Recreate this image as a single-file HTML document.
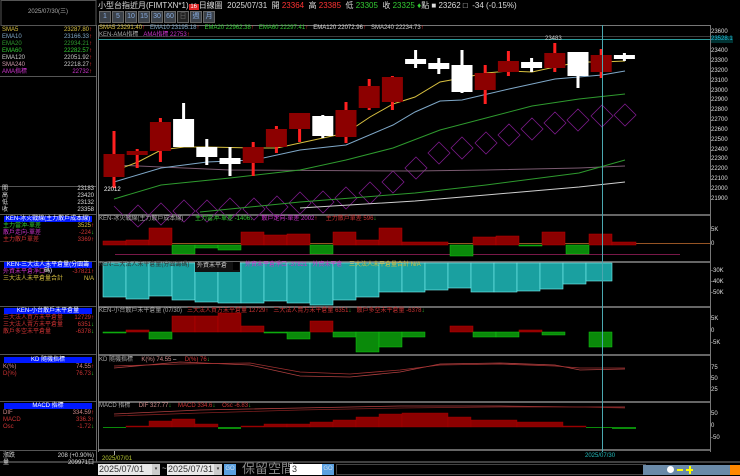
<!DOCTYPE html>
<html><head><meta charset="utf-8"><style>
*{margin:0;padding:0;box-sizing:border-box}
body{width:740px;height:475px;background:#000;overflow:hidden;position:relative;font-family:"Liberation Sans","Noto Sans CJK TC",sans-serif;color:#ddd}
.t{position:absolute;white-space:nowrap;font-size:6px;line-height:7px}
.r{text-align:right}
.hb{position:absolute;left:4px;width:88px;height:6px;background:#0018ff;color:#fff;font-size:6px;line-height:6px;text-align:center}
.btn{position:absolute;top:11px;width:12px;height:12px;background:#3a4048;border:1px solid #666;color:#8ad;font-size:7px;line-height:10px;text-align:center}
</style></head><body>
<svg width="740" height="475" style="position:absolute;left:0;top:0">
<rect x="1" y="0.5" width="95" height="25" fill="none" stroke="#555"/>
<line x1="96.5" y1="25" x2="96.5" y2="462" stroke="#666"/>
<line x1="98.5" y1="25" x2="98.5" y2="452" stroke="#777"/>
<line x1="710.5" y1="25" x2="710.5" y2="452" stroke="#777"/>
<line x1="98" y1="25.5" x2="710" y2="25.5" stroke="#777"/>
<g stroke="#888" stroke-width="1.5">
<line x1="98" y1="215" x2="710" y2="215"/><line x1="98" y1="262" x2="710" y2="262"/>
<line x1="98" y1="307" x2="710" y2="307"/><line x1="98" y1="355" x2="710" y2="355"/>
<line x1="98" y1="402" x2="710" y2="402"/><line x1="98" y1="450" x2="710" y2="450"/>
<line x1="0" y1="462" x2="740" y2="462" stroke="#555"/>
</g>
<g stroke="#555"><line x1="0" y1="76.5" x2="96" y2="76.5"/><line x1="0" y1="186.5" x2="96" y2="186.5"/><line x1="0" y1="214.5" x2="96" y2="214.5"/><line x1="0" y1="261.5" x2="96" y2="261.5"/><line x1="0" y1="306.5" x2="96" y2="306.5"/><line x1="0" y1="354.5" x2="96" y2="354.5"/><line x1="0" y1="401.5" x2="96" y2="401.5"/><line x1="0" y1="450.5" x2="96" y2="450.5"/></g>
<line x1="98" y1="39.5" x2="710" y2="39.5" stroke="#2a9a9a"/>
<line x1="98" y1="36.5" x2="710" y2="36.5" stroke="#777" stroke-width=".5"/>
<g fill="none" stroke="#7a1a88" stroke-width=".8">
<path d="M625 104l11 11-11 11-11-11z M602 105l11 11-11 11-11-11z M578 109l11 11-11 11-11-11z M555 112l11 11-11 11-11-11z M532 118l11 11-11 11-11-11z M509 124l11 11-11 11-11-11z M486 132l11 11-11 11-11-11z M462 137l11 11-11 11-11-11z M439 142l11 11-11 11-11-11z M416 157l11 11-11 11-11-11z M393 171l11 11-11 11-11-11z M370 182l11 11-11 11-11-11z M346 187l11 11-11 11-11-11z M323 191l11 11-11 11-11-11z M300 192l11 11-11 11-11-11z M277 196l11 11-11 11-11-11z M254 198l11 11-11 11-11-11z M230 198l11 11-11 11-11-11z M207 200l11 11-11 11-11-11z M184 200l11 11-11 11-11-11z M161 203l11 11-11 11-11-11z M138 205l11 11-11 11-11-11z M114 206l9 9"/>
</g>
<g fill="none" stroke-width="1">
<polyline stroke="#7a5a70" points="114,165 230,170 415,171 486,170 579,168 625,166"/>
<polyline stroke="#cfcfcf" points="300,208 415,201 486,195 579,187 625,182"/>
<polyline stroke="#2e9a2e" points="200,212 300,202 415,193 486,185 579,173 625,160"/>
<polyline stroke="#2e9a2e" points="114,199 161,185 230,178 300,170 346,160 393,148 440,130 486,118 532,106 579,99 625,94"/>
<polyline stroke="#7fa8c8" points="114,182 161,168 207,162 254,160 300,150 346,145 393,125 415,112 440,101 462,100 509,89 555,79 602,75 625,71"/>
<polyline stroke="#d8c040" points="114,171 138,162 161,150 184,147 207,147 254,148 277,148 300,143 323,138 346,133 370,117 393,104 415,97 440,82 462,78 486,73 509,71 532,72 555,67 579,62 602,62 625,61"/>
</g>
<g fill="#ff2020">
<rect x="112.5" y="131" width="3" height="57"/><rect x="135.7" y="149" width="3" height="19"/><rect x="158.9" y="118" width="3" height="44"/>
<rect x="251.7" y="142" width="3" height="34"/><rect x="274.9" y="126" width="3" height="27"/><rect x="298.1" y="113" width="3" height="29"/>
<rect x="344.5" y="102" width="3" height="41"/><rect x="367.7" y="79" width="3" height="31"/><rect x="390.9" y="76" width="3" height="34"/>
<rect x="483.7" y="65" width="3" height="39"/><rect x="506.9" y="51" width="3" height="25"/><rect x="553.3" y="43" width="3" height="29"/><rect x="599.7" y="49" width="3" height="29"/>
</g>
<g fill="#8c0000">
<rect x="103.5" y="154" width="21" height="23"/><rect x="126.7" y="151" width="21" height="4"/><rect x="149.9" y="122" width="21" height="29"/>
<rect x="242.7" y="147" width="21" height="16"/><rect x="265.9" y="129" width="21" height="18"/><rect x="289.1" y="113" width="21" height="16"/>
<rect x="335.5" y="110" width="21" height="27"/><rect x="358.7" y="86" width="21" height="22"/><rect x="381.9" y="77" width="21" height="25"/>
<rect x="474.7" y="73" width="21" height="17"/><rect x="497.9" y="61" width="21" height="11"/><rect x="544.3" y="53" width="21" height="15"/><rect x="590.7" y="55" width="21" height="17"/>
</g>
<g fill="#fff">
<rect x="182.1" y="103" width="3" height="44"/><rect x="173.1" y="119" width="21" height="28"/>
<rect x="205.3" y="139" width="3" height="26"/><rect x="196.3" y="147" width="21" height="10"/>
<rect x="228.5" y="147" width="3" height="29"/><rect x="219.5" y="158" width="21" height="6"/>
<rect x="321.3" y="115" width="3" height="23"/><rect x="312.3" y="116" width="21" height="20"/>
<rect x="414.1" y="50" width="3" height="18"/><rect x="405.1" y="59" width="21" height="5"/>
<rect x="437.3" y="58" width="3" height="16"/><rect x="428.3" y="63" width="21" height="6"/>
<rect x="460.5" y="50" width="3" height="43"/><rect x="451.5" y="65" width="21" height="27"/>
<rect x="530.1" y="58" width="3" height="14"/><rect x="521.1" y="62" width="21" height="6"/>
<rect x="576.5" y="52" width="3" height="36"/><rect x="567.5" y="52" width="21" height="24"/>
<rect x="622.9" y="53" width="3" height="8"/><rect x="613.9" y="55" width="21" height="4"/>
</g>
<line x1="110" y1="243.5" x2="710" y2="243.5" stroke="#c87030" stroke-width=".8"/>
<line x1="115" y1="254.5" x2="680" y2="254.5" stroke="#a02060" stroke-width=".8"/>
<g fill="#8c0000" stroke="#b00" stroke-width=".5">
<rect x="103" y="241" width="23" height="4"/><rect x="126" y="240" width="23" height="5"/><rect x="149" y="228" width="23" height="17"/>
<rect x="241" y="232" width="23" height="13"/><rect x="264" y="235" width="23" height="10"/><rect x="287" y="234" width="23" height="11"/>
<rect x="333" y="232" width="23" height="13"/><rect x="356" y="240" width="23" height="5"/><rect x="379" y="228" width="23" height="17"/>
<rect x="402" y="242" width="46" height="3"/><rect x="473" y="237" width="23" height="8"/><rect x="496" y="236" width="23" height="9"/>
<rect x="542" y="232" width="23" height="13"/><rect x="589" y="234" width="23" height="11"/><rect x="612" y="242" width="24" height="3"/>
</g>
<g fill="#0a8a0a" stroke="#1c1" stroke-width=".5">
<rect x="172" y="245" width="23" height="9"/><rect x="195" y="245" width="23" height="3"/><rect x="218" y="245" width="23" height="5"/>
<rect x="310" y="245" width="23" height="9"/><rect x="450" y="245" width="23" height="11"/><rect x="519" y="245" width="23" height="1"/><rect x="566" y="245" width="23" height="9"/>
</g>
<g fill="#1aa0a0" stroke="#7ee" stroke-width=".6">
<rect x="103" y="263" width="23" height="34"/><rect x="126" y="263" width="23" height="36"/><rect x="149" y="263" width="23" height="33"/>
<rect x="172" y="263" width="23" height="37"/><rect x="195" y="263" width="23" height="39"/><rect x="218" y="263" width="23" height="40"/>
<rect x="241" y="263" width="23" height="40"/><rect x="264" y="263" width="23" height="38"/><rect x="287" y="263" width="23" height="40"/>
<rect x="310" y="263" width="23" height="42"/><rect x="333" y="263" width="23" height="37"/><rect x="356" y="263" width="23" height="34"/>
<rect x="379" y="263" width="23" height="29"/><rect x="402" y="263" width="23" height="29"/><rect x="425" y="263" width="23" height="27"/>
<rect x="448" y="263" width="23" height="25"/><rect x="471" y="263" width="23" height="29"/><rect x="494" y="263" width="23" height="29"/>
<rect x="517" y="263" width="23" height="28"/><rect x="540" y="263" width="23" height="26"/><rect x="563" y="263" width="23" height="21"/><rect x="586" y="263" width="26" height="18"/>
</g>
<rect x="195" y="262" width="45" height="10" fill="#111"/>
<rect x="233" y="262" width="6" height="8" fill="#000"/>
<g fill="#8c0000" stroke="#b00" stroke-width=".5">
<rect x="126" y="330" width="23" height="2"/><rect x="172" y="316" width="23" height="16"/><rect x="195" y="316" width="23" height="16"/>
<rect x="218" y="313" width="23" height="19"/><rect x="241" y="326" width="23" height="6"/><rect x="310" y="321" width="23" height="11"/>
<rect x="450" y="326" width="23" height="6"/><rect x="519" y="330" width="23" height="2"/>
</g>
<g fill="#0a8a0a" stroke="#1c1" stroke-width=".5">
<rect x="103" y="332" width="23" height="1"/><rect x="149" y="332" width="23" height="7"/><rect x="264" y="332" width="23" height="1"/>
<rect x="287" y="332" width="23" height="7"/><rect x="333" y="332" width="23" height="5"/><rect x="356" y="332" width="23" height="20"/>
<rect x="379" y="332" width="23" height="15"/><rect x="402" y="332" width="23" height="5"/><rect x="473" y="332" width="23" height="5"/>
<rect x="496" y="332" width="23" height="5"/><rect x="542" y="332" width="23" height="3"/><rect x="589" y="332" width="23" height="15"/>
</g>
<polyline fill="none" stroke="#b04040" stroke-width=".8" points="114,368 180,362 250,365 300,376 350,377 400,372 440,364 500,363 555,365 580,370 625,369"/>
<polyline fill="none" stroke="#a03030" stroke-width=".8" points="114,366 180,364 250,363 300,372 350,374 400,370 440,365 500,364 555,366 580,368 625,368"/>
<polyline fill="none" stroke="#b04040" stroke-width=".8" points="114,414 200,410 300,408 400,406 500,406 580,407 625,407"/>
<polyline fill="none" stroke="#802020" stroke-width=".8" points="114,416 200,413 300,410 400,408 500,407 580,407 625,408"/>
<g fill="#8c0000" stroke="#a00" stroke-width=".4">
<rect x="126" y="426" width="23" height="1"/><rect x="149" y="421" width="23" height="6"/><rect x="172" y="419" width="23" height="8"/>
<rect x="195" y="424" width="23" height="3"/><rect x="241" y="426" width="23" height="1"/><rect x="264" y="424" width="23" height="3"/>
<rect x="287" y="424" width="23" height="3"/><rect x="310" y="422" width="23" height="5"/><rect x="333" y="420" width="23" height="7"/>
<rect x="356" y="417" width="23" height="10"/><rect x="379" y="414" width="23" height="13"/><rect x="402" y="413" width="46" height="14"/>
<rect x="448" y="417" width="23" height="10"/><rect x="471" y="420" width="46" height="7"/><rect x="517" y="422" width="46" height="5"/><rect x="563" y="426" width="23" height="1"/>
</g>
<g fill="#0a8a0a"><rect x="103" y="427" width="23" height="1"/><rect x="218" y="427" width="23" height="2"/><rect x="586" y="427" width="26" height="1"/><rect x="612" y="427" width="24" height="2"/></g>
<line x1="602.5" y1="25" x2="602.5" y2="452" stroke="#4aa8b0" stroke-width="1"/>
<line x1="114.5" y1="451" x2="114.5" y2="455" stroke="#aaa"/>
</svg>

<div class="t" style="left:0;top:9px;width:96px;text-align:center;color:#aaa">2025/07/30(三)</div>
<div class="t" style="left:2px;top:27px;color:#d8c040">SMA5</div><div class="t r" style="right:648px;top:27px;color:#d8c040">23287.80<span style="color:#f33">↑</span></div>
<div class="t" style="left:2px;top:34px;color:#7fa8c8">EMA10</div><div class="t r" style="right:648px;top:34px;color:#7fa8c8">23166.33<span style="color:#f33">↑</span></div>
<div class="t" style="left:2px;top:41px;color:#2e9a2e">EMA20</div><div class="t r" style="right:648px;top:41px;color:#2e9a2e">22934.21<span style="color:#f33">↑</span></div>
<div class="t" style="left:2px;top:48px;color:#3c3">EMA60</div><div class="t r" style="right:648px;top:48px;color:#3c3">22282.57<span style="color:#f33">↑</span></div>
<div class="t" style="left:2px;top:55px;color:#ccc">EMA120</div><div class="t r" style="right:648px;top:55px;color:#ccc">22051.92<span style="color:#f33">↑</span></div>
<div class="t" style="left:2px;top:62px;color:#c9a">SMA240</div><div class="t r" style="right:648px;top:62px;color:#ccc">22218.27<span style="color:#f33">↑</span></div>
<div class="t" style="left:2px;top:69px;color:#c3c">AMA指標</div><div class="t r" style="right:648px;top:69px;color:#c3c">22732<span style="color:#f33">↑</span></div>
<div class="t" style="left:2px;top:186px">開</div><div class="t r" style="right:646px;top:186px">23183</div>
<div class="t" style="left:2px;top:193px">高</div><div class="t r" style="right:646px;top:193px">23420</div>
<div class="t" style="left:2px;top:200px">低</div><div class="t r" style="right:646px;top:200px">23132</div>
<div class="t" style="left:2px;top:207px">收</div><div class="t r" style="right:646px;top:207px">23358</div>
<div class="hb" style="top:216px">KEN-冰火戰線(主力散戶成本線)</div>
<div class="t" style="left:3px;top:223px;color:#3c3">主力當沖-單差</div><div class="t r" style="right:646px;top:223px;color:#d8c040">3525<span style="color:#f33">↑</span></div>
<div class="t" style="left:3px;top:230px;color:#c3c">散戶走向-單差</div><div class="t r" style="right:646px;top:230px;color:#c33">-224<span style="color:#3c3">↓</span></div>
<div class="t" style="left:3px;top:237px;color:#c33">主力散戶單差</div><div class="t r" style="right:646px;top:237px;color:#c33">3369<span style="color:#f33">↑</span></div>
<div class="hb" style="top:262px">KEN-三大法人未平倉量(分園籌碼)</div>
<div class="t" style="left:3px;top:269px;color:#c3c">外資未平倉淨口</div><div class="t r" style="right:646px;top:269px;color:#c33">-37821<span style="color:#f33">↑</span></div>
<div class="t" style="left:3px;top:276px;color:#d8c040">三大法人未平倉量合計</div><div class="t r" style="right:646px;top:276px;color:#d8c040">N/A</div>
<div class="hb" style="top:308px">KEN-小台散戶未平倉量</div>
<div class="t" style="left:3px;top:315px;color:#c33">三大法人買方未平倉量</div><div class="t r" style="right:646px;top:315px;color:#c33">12729<span style="color:#f33">↑</span></div>
<div class="t" style="left:3px;top:322px;color:#c33">三大法人賣方未平倉量</div><div class="t r" style="right:646px;top:322px;color:#c33">6351<span style="color:#3c3">↓</span></div>
<div class="t" style="left:3px;top:329px;color:#c33">散戶多空未平倉量</div><div class="t r" style="right:646px;top:329px;color:#c33">-6378<span style="color:#3c3">↓</span></div>
<div class="hb" style="top:357px">KD 隨機指標</div>
<div class="t" style="left:3px;top:364px;color:#c88">K(%)</div><div class="t r" style="right:646px;top:364px;color:#c88">74.55<span style="color:#f33">↑</span></div>
<div class="t" style="left:3px;top:371px;color:#c33">D(%)</div><div class="t r" style="right:646px;top:371px;color:#c33">76.73<span style="color:#3c3">↓</span></div>
<div class="hb" style="top:403px">MACD 指標</div>
<div class="t" style="left:3px;top:410px;color:#c88">DIF</div><div class="t r" style="right:646px;top:410px;color:#c88">334.59<span style="color:#f33">↑</span></div>
<div class="t" style="left:3px;top:417px;color:#c33">MACD</div><div class="t r" style="right:646px;top:417px;color:#c33">336.3<span style="color:#f33">↑</span></div>
<div class="t" style="left:3px;top:424px;color:#c33">Osc</div><div class="t r" style="right:646px;top:424px;color:#c33">-1.72<span style="color:#3c3">↓</span></div>
<div class="t" style="left:3px;top:453px">漲跌</div><div class="t r" style="right:646px;top:453px">208 (+0.90%)</div>
<div class="t" style="left:3px;top:460px">量</div><div class="t r" style="right:646px;top:460px">209971口</div>

<div class="t" style="left:98px;top:1px;font-size:8px;line-height:9px;color:#ddd">小型台指近月(FIMTXN*1)<span style="background:#d22;color:#fff;font-size:6px"> 16 </span> 日線圖 &nbsp;2025/07/31 &nbsp;開 <span style="color:#f33">23364</span> &nbsp;高 <span style="color:#f33">23385</span> &nbsp;低 <span style="color:#3c3">23305</span> &nbsp;收 <span style="color:#3c3">23325</span> <span style="color:#3c3">♦</span>點 ■ 23262 □ &nbsp;-34 (-0.15%)</div>
<div class="btn" style="left:99px">1</div><div class="btn" style="left:112px">5</div><div class="btn" style="left:125px">10</div><div class="btn" style="left:138px">15</div><div class="btn" style="left:151px">30</div><div class="btn" style="left:164px">60</div><div class="btn" style="left:177px;background:#222;color:#666">日</div><div class="btn" style="left:190px">週</div><div class="btn" style="left:203px">月</div>

<div class="t" style="left:99px;top:25px"><span style="color:#d8c040">SMA5 23291.40</span><span style="color:#f33">↑</span> &nbsp; <span style="color:#7fa8c8">EMA10 23195.18</span><span style="color:#f33">↑</span> &nbsp; <span style="color:#3c3">EMA20 22962.38</span><span style="color:#f33">↑</span> &nbsp; <span style="color:#3c3">EMA60 22297.41</span><span style="color:#f33">↑</span> &nbsp; <span style="color:#ddd">EMA120 22072.96</span><span style="color:#f33">↑</span> &nbsp; <span style="color:#ccc">SMA240 22234.73</span><span style="color:#f33">↑</span></div>
<div class="t" style="left:99px;top:32px"><span style="color:#aaa">KEN-AMA指標</span> &nbsp; <span style="color:#c3c">AMA指標 22753</span><span style="color:#f33">↑</span></div>
<div class="t" style="left:104px;top:187px;color:#fff">22012</div>
<div class="t" style="left:545px;top:36px;color:#ccc">23483</div>
<div class="t" style="left:99px;top:216px"><span style="color:#aaa">KEN-冰火戰線(主力散戶成本線)</span> &nbsp; &nbsp; &nbsp; <span style="color:#3c3">主力當沖-單差 -1406</span><span style="color:#3c3">↓</span> &nbsp; &nbsp; <span style="color:#c3c">散戶走向-單差 2002</span><span style="color:#f33">↑</span> &nbsp; &nbsp; <span style="color:#c33">主力散戶單差 596</span><span style="color:#3c3">↓</span></div>
<div class="t" style="left:99px;top:262px;color:#333">KEN-三大法人未平倉量(分園籌碼)</div>
<div class="t" style="left:197px;top:263px;color:#ccc">外資未平倉</div>
<div class="t" style="left:245px;top:262px"><span style="color:#c3c">外資未平倉淨口 -37821 &nbsp; 外資未平倉</span> &nbsp; &nbsp;<span style="color:#d8c040">三大法人未平倉量合計 N/A</span></div>
<div class="t" style="left:99px;top:308px"><span style="color:#aaa">KEN-小台散戶未平倉量 (07/30)</span> &nbsp; <span style="color:#c33">三大法人買方未平倉量 12729</span><span style="color:#f33">↑</span> &nbsp; <span style="color:#c33">三大法人賣方未平倉量 6351</span><span style="color:#3c3">↓</span> &nbsp; <span style="color:#c33">散戶多空未平倉量 -6378</span><span style="color:#3c3">↓</span></div>
<div class="t" style="left:99px;top:357px"><span style="color:#aaa">KD 隨機指標</span> &nbsp; &nbsp; <span style="color:#c88">K(%) 74.55</span> – &nbsp; &nbsp; <span style="color:#c33">D(%) 76</span><span style="color:#3c3">↓</span></div>
<div class="t" style="left:99px;top:403px"><span style="color:#aaa">MACD 指標</span> &nbsp; &nbsp; <span style="color:#c88">DIF 327.77</span><span style="color:#3c3">↓</span> &nbsp; &nbsp;<span style="color:#c33">MACD 334.6</span><span style="color:#3c3">↓</span> &nbsp; &nbsp;<span style="color:#c33">Osc -6.83</span><span style="color:#3c3">↓</span></div>

<div class="t" style="left:711px;top:29px">23600</div>
<div class="t" style="left:711px;top:36px;color:#2bd;background:#033">23528.1</div>
<div class="t" style="left:711px;top:48px">23400</div><div class="t" style="left:711px;top:58px">23300</div><div class="t" style="left:711px;top:68px">23200</div>
<div class="t" style="left:711px;top:78px">23100</div><div class="t" style="left:711px;top:88px">23000</div><div class="t" style="left:711px;top:97px">22900</div>
<div class="t" style="left:711px;top:107px">22800</div><div class="t" style="left:711px;top:117px">22700</div><div class="t" style="left:711px;top:127px">22600</div>
<div class="t" style="left:711px;top:137px">22500</div><div class="t" style="left:711px;top:147px">22400</div><div class="t" style="left:711px;top:156px">22300</div>
<div class="t" style="left:711px;top:166px">22200</div><div class="t" style="left:711px;top:176px">22100</div><div class="t" style="left:711px;top:186px">22000</div>
<div class="t" style="left:711px;top:196px">21900</div>
<div class="t" style="left:711px;top:227px">5K</div><div class="t" style="left:711px;top:241px">0</div>
<div class="t" style="left:711px;top:268px">-30K</div><div class="t" style="left:711px;top:279px">-40K</div><div class="t" style="left:711px;top:290px">-50K</div>
<div class="t" style="left:711px;top:316px">5K</div><div class="t" style="left:711px;top:328px">0</div><div class="t" style="left:711px;top:340px">-5K</div>
<div class="t" style="left:711px;top:365px">75</div><div class="t" style="left:711px;top:376px">50</div><div class="t" style="left:711px;top:387px">25</div>
<div class="t" style="left:711px;top:411px">50</div><div class="t" style="left:711px;top:423px">0</div><div class="t" style="left:711px;top:435px">-50</div>

<div class="t" style="left:102px;top:456px;color:#bc3">2025/07/01</div>
<div class="t" style="left:585px;top:453px;color:#2bb">2025/07/30</div>

<div style="position:absolute;left:98px;top:464px;width:62px;height:11px;background:#e8e8e8;color:#333;font-size:9px;line-height:11px;padding-left:1px">2025/07/01</div>
<div style="position:absolute;left:152px;top:464px;width:8px;height:11px;background:#ccc;font-size:5px;color:#333;text-align:center;line-height:11px">▾</div>
<div class="t" style="left:162px;top:465px;font-size:8px;color:#ccc">~</div>
<div style="position:absolute;left:167px;top:464px;width:55px;height:11px;background:#e8e8e8;color:#333;font-size:9px;line-height:11px;padding-left:1px">2025/07/31</div>
<div style="position:absolute;left:214px;top:464px;width:8px;height:11px;background:#ccc;font-size:5px;color:#333;text-align:center;line-height:11px">▾</div>
<div style="position:absolute;left:224px;top:464px;width:12px;height:11px;background:#5aa0e0;color:#cde;font-size:6px;line-height:11px;text-align:center">GO</div>
<div class="t" style="left:242px;top:462px;font-size:13px;line-height:14px;color:#888">保留空間</div>
<div style="position:absolute;left:290px;top:464px;width:32px;height:11px;background:#fff;color:#333;font-size:9px;line-height:11px;padding-left:2px">3</div>
<div style="position:absolute;left:322px;top:464px;width:12px;height:11px;background:#5aa0e0;color:#cde;font-size:6px;line-height:11px;text-align:center">GO</div>
<div style="position:absolute;left:336px;top:464px;width:310px;height:11px;border:1px solid #444"></div>
<div style="position:absolute;left:643px;top:465px;width:97px;height:10px;background:#6a8aa8"></div>
<div style="position:absolute;left:667px;top:466px;width:7px;height:7px;border-radius:50%;background:#fff"></div>
<div style="position:absolute;left:677px;top:469px;width:6px;height:2px;background:#ff0"></div>
<div style="position:absolute;left:686px;top:469px;width:7px;height:2px;background:#ff0"></div><div style="position:absolute;left:688.5px;top:466px;width:2px;height:8px;background:#ff0"></div>
<div style="position:absolute;left:730px;top:465px;width:10px;height:10px;background:#f80"></div>
</body></html>
